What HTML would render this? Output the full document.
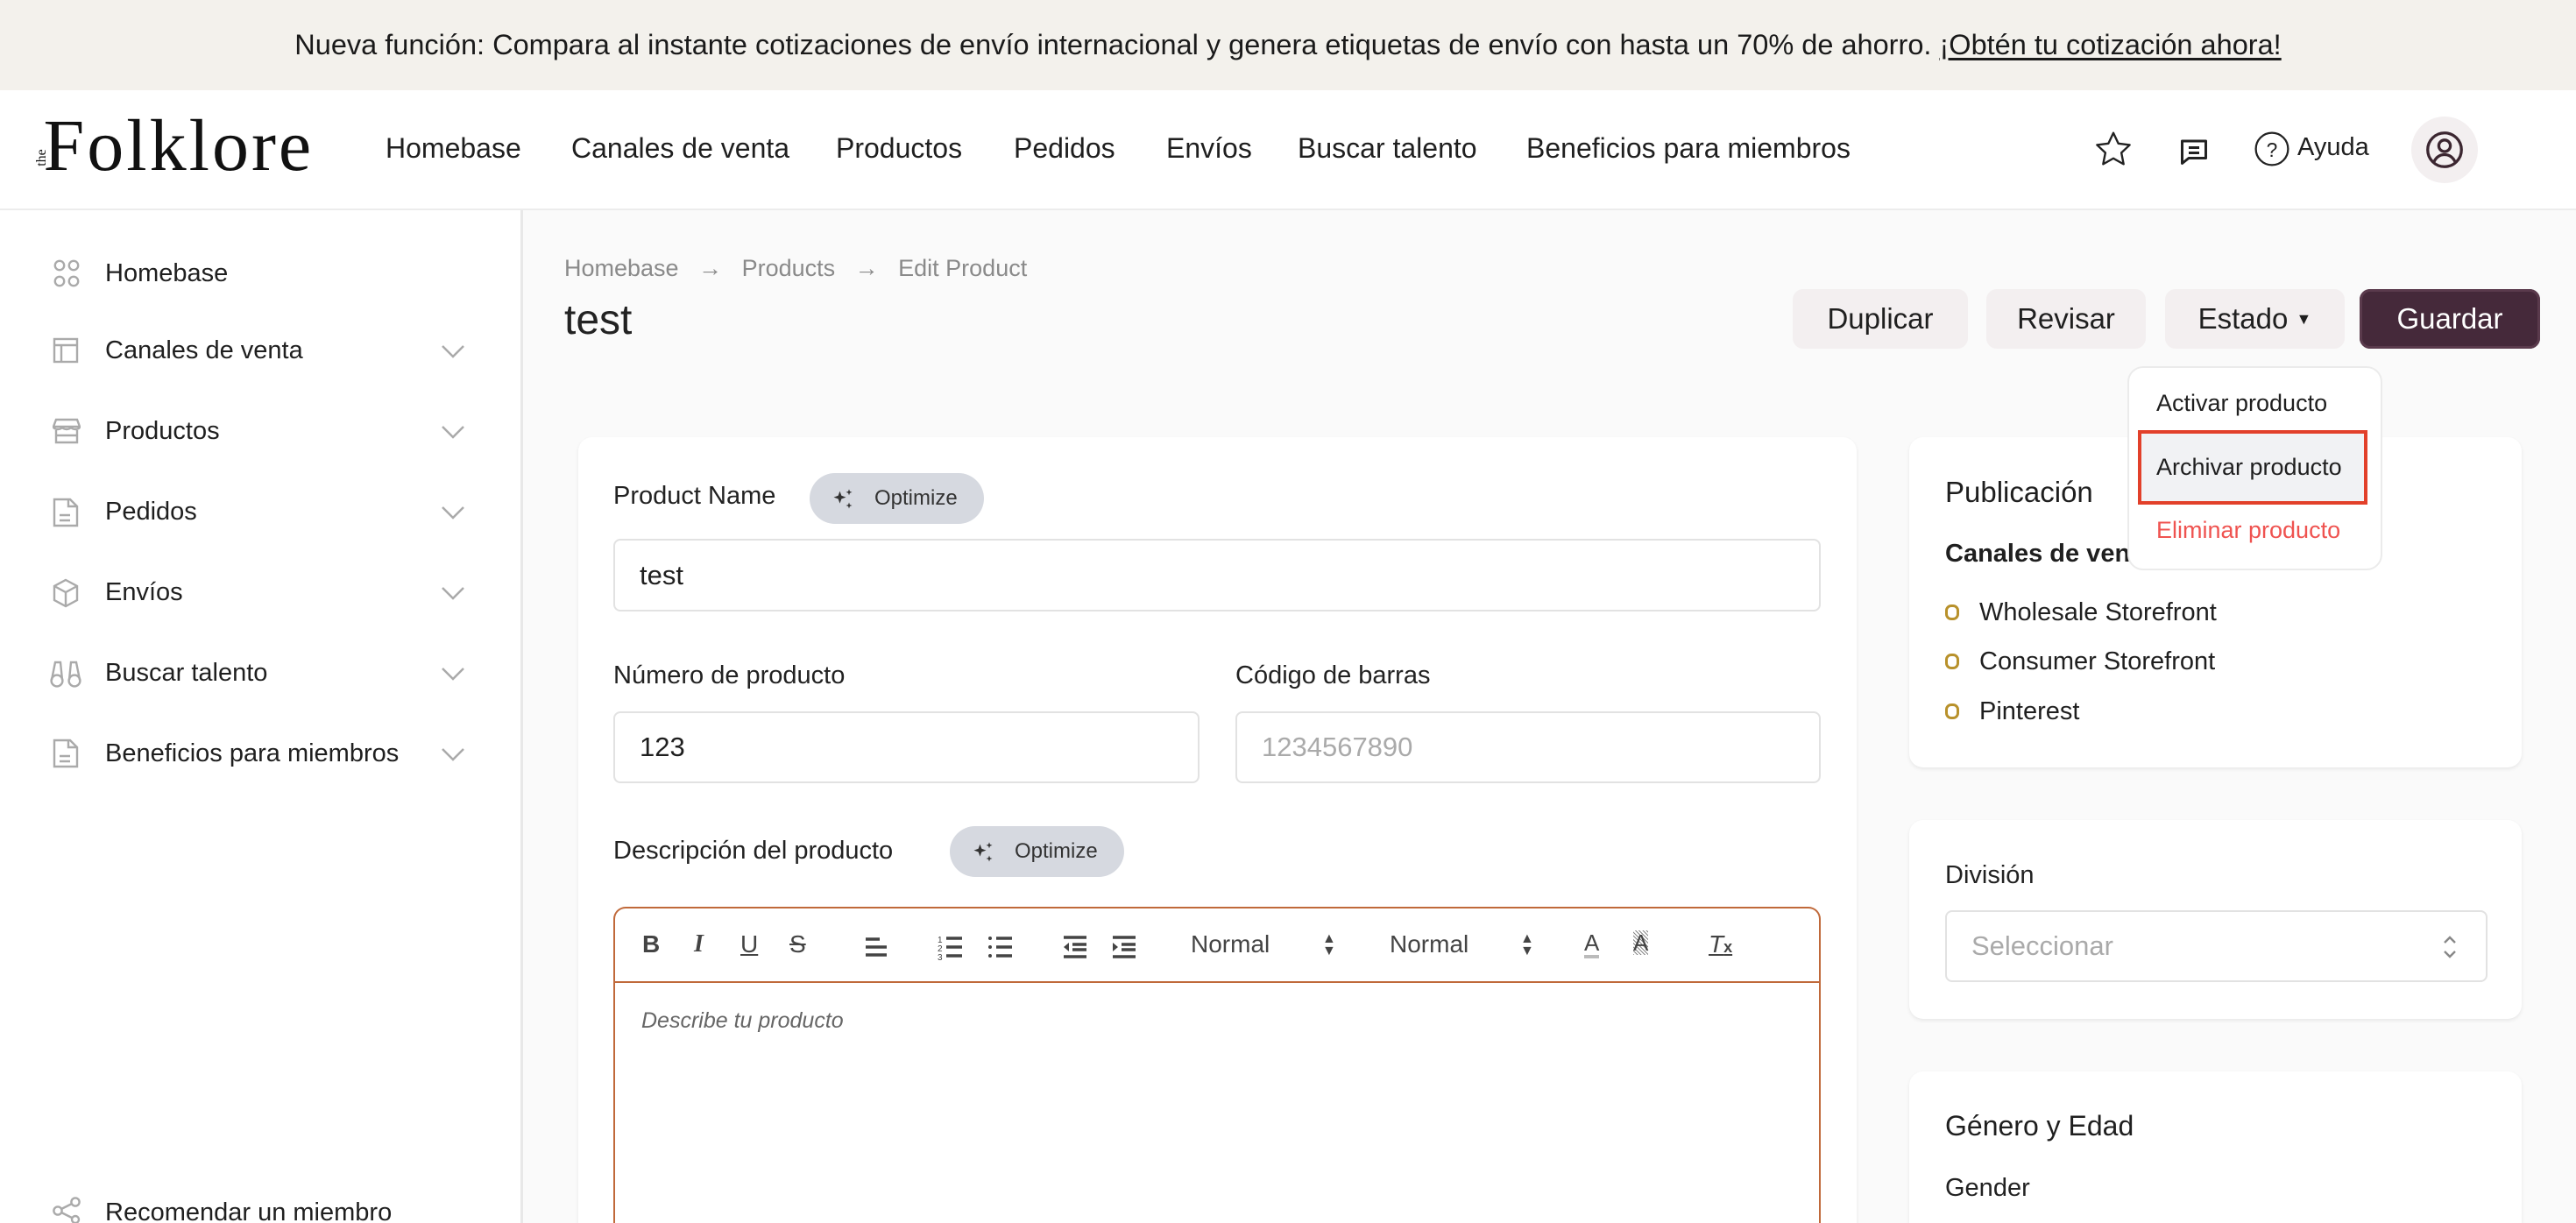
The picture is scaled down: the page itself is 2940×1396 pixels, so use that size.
<!DOCTYPE html>
<html style="overflow:hidden;height:1396px"><head><meta charset="utf-8">
<style>
*{margin:0;padding:0;box-sizing:border-box}
body{width:2940px;height:1396px;overflow:hidden;background:#fafafa;font-family:"Liberation Sans",sans-serif;color:#1f1f1f;position:relative}
.a{position:absolute;white-space:nowrap}
.banner{left:0;top:0;width:2940px;height:103px;background:#f3f1ec;font-size:32.5px;line-height:103px;text-align:center;color:#1a1a1a}
.banner u{text-underline-offset:4px}
.header{left:0;top:103px;width:2940px;height:137px;background:#fff;border-bottom:2px solid #ececec}
.nav{font-size:32px;top:151px;color:#1f1f1f}
.side{left:0;top:240px;width:597px;height:1156px;background:#fff;border-right:3px solid #e8e8e8}
.si{font-size:29px;left:120px}
.ico{position:absolute;left:60px}
.chev{position:absolute;left:502px}
.btn{top:330px;height:68px;border-radius:12px;background:#f3eff0;font-size:33px;line-height:68px;text-align:center;color:#1f1f1f}
.card{background:#fff;border-radius:16px;box-shadow:0 2px 4px rgba(0,0,0,.08)}
.lbl{font-size:29px;color:#222}
.inp{border:2px solid #e2e2e2;border-radius:8px;background:#fff;font-size:31px;padding-left:28px}
.pill{background:#d6d9e0;border-radius:30px;font-size:24px;color:#333}
.tb{position:absolute;top:1062px;font-size:28px;color:#444}
</style></head><body>
<div class="a banner">Nueva función: Compara al instante cotizaciones de envío internacional y genera etiquetas de envío con hasta un 70% de ahorro. <u>¡Obtén tu cotización ahora!</u></div>
<div class="a header"></div>
<div class="a" style="left:30px;top:118px;font-family:'Liberation Serif',serif;font-size:84px;color:#111;letter-spacing:3px"><span style="font-size:16px;display:inline-block;transform:rotate(-90deg);position:relative;top:-10px;left:8px;letter-spacing:0">the</span>Folklore</div>
<div class="a nav" style="left:440px">Homebase</div>
<div class="a nav" style="left:652px">Canales de venta</div>
<div class="a nav" style="left:954px">Productos</div>
<div class="a nav" style="left:1157px">Pedidos</div>
<div class="a nav" style="left:1331px">Envíos</div>
<div class="a nav" style="left:1481px">Buscar talento</div>
<div class="a nav" style="left:1742px">Beneficios para miembros</div>
<svg class="a" style="left:2390px;top:149px" width="44" height="42" viewBox="0 0 24 23"><path d="M12 1.5l3.1 6.6 7.1.9-5.2 4.9 1.4 7.1L12 17.4 5.6 21l1.4-7.1L1.8 9l7.1-.9z" fill="none" stroke="#222" stroke-width="1.3" stroke-linejoin="round"/></svg>
<svg class="a" style="left:2486px;top:155px" width="36" height="36" viewBox="0 0 24 24"><path d="M3 4h18v13H8l-5 4z" fill="none" stroke="#222" stroke-width="2" stroke-linejoin="round"/><path d="M8 9h8M8 13h8" stroke="#222" stroke-width="2"/></svg>
<svg class="a" style="left:2572px;top:149px" width="42" height="42" viewBox="0 0 24 24"><circle cx="12" cy="12" r="10.5" fill="none" stroke="#222" stroke-width="1.3"/><text x="12" y="17" font-size="13" text-anchor="middle" font-family="Liberation Sans" fill="#222">?</text></svg>
<div class="a" style="left:2622px;top:152px;font-size:29px">Ayuda</div>
<div class="a" style="left:2752px;top:133px;width:76px;height:76px;border-radius:50%;background:#f3eff0"></div>
<svg class="a" style="left:2768px;top:149px" width="44" height="44" viewBox="0 0 24 24"><circle cx="12" cy="12" r="10.5" fill="none" stroke="#3b2630" stroke-width="1.8"/><circle cx="12" cy="9.5" r="3.6" fill="none" stroke="#3b2630" stroke-width="1.8"/><path d="M5.5 19.3c1.5-3 4-4.3 6.5-4.3s5 1.3 6.5 4.3" fill="none" stroke="#3b2630" stroke-width="1.8"/></svg>

<div class="a side"></div>
<svg class="ico" style="top:295px" width="32" height="34" viewBox="0 0 16 17" fill="none" stroke="#aaa" stroke-width="1.2"><circle cx="4" cy="4" r="2.6"/><circle cx="12" cy="4" r="2.6"/><circle cx="4" cy="13" r="2.6"/><circle cx="12" cy="13" r="2.6"/></svg>
<div class="a si" style="top:296px">Homebase</div>
<svg class="ico" style="top:385px" width="30" height="30" viewBox="0 0 15 15" fill="none" stroke="#aaa" stroke-width="1.2"><rect x="1" y="1" width="13" height="13"/><path d="M1 4.5h13M5 4.5V14"/></svg>
<div class="a si" style="top:384px">Canales de venta</div>
<svg class="ico" style="top:477px" width="32" height="30" viewBox="0 0 16 15" fill="none" stroke="#aaa" stroke-width="1.2"><path d="M2 1h12l1.5 4H.5zM.5 5c0 2 5 2 5 0 0 2 5 2 5 0 0 2 5 2 5 0M2 7v7h12V7M2 10h12"/></svg>
<div class="a si" style="top:476px">Productos</div>
<svg class="ico" style="top:568px" width="30" height="34" viewBox="0 0 15 17" fill="none" stroke="#aaa" stroke-width="1.2"><path d="M1 1h9l4 4v11H1zM9 1v4h5M4 10h6M4 13h6"/></svg>
<div class="a si" style="top:568px">Pedidos</div>
<svg class="ico" style="top:660px" width="30" height="34" viewBox="0 0 15 17" fill="none" stroke="#aaa" stroke-width="1.2"><path d="M7.5 1L14 4.5v8L7.5 16 1 12.5v-8zM1 4.5l6.5 3.5 6.5-3.5M7.5 8v8"/></svg>
<div class="a si" style="top:660px">Envíos</div>
<svg class="ico" style="top:752px;left:57px" width="36" height="34" viewBox="0 0 18 17" fill="none" stroke="#aaa" stroke-width="1.2"><circle cx="4" cy="12.5" r="3.2"/><circle cx="14" cy="12.5" r="3.2"/><path d="M1 12l2-10h3l1 10M17 12l-2-10h-3l-1 10"/></svg>
<div class="a si" style="top:752px">Buscar talento</div>
<svg class="ico" style="top:843px" width="30" height="34" viewBox="0 0 15 17" fill="none" stroke="#aaa" stroke-width="1.2"><path d="M1 1h9l4 4v11H1zM9 1v4h5M4 10h6M4 13h6"/></svg>
<div class="a si" style="top:844px">Beneficios para miembros</div>
<svg class="chev" style="top:392px" width="30" height="18" viewBox="0 0 30 18"><path d="M3 3l12 12L27 3" fill="none" stroke="#aaa" stroke-width="2.5"/></svg>
<svg class="chev" style="top:484px" width="30" height="18" viewBox="0 0 30 18"><path d="M3 3l12 12L27 3" fill="none" stroke="#aaa" stroke-width="2.5"/></svg>
<svg class="chev" style="top:576px" width="30" height="18" viewBox="0 0 30 18"><path d="M3 3l12 12L27 3" fill="none" stroke="#aaa" stroke-width="2.5"/></svg>
<svg class="chev" style="top:668px" width="30" height="18" viewBox="0 0 30 18"><path d="M3 3l12 12L27 3" fill="none" stroke="#aaa" stroke-width="2.5"/></svg>
<svg class="chev" style="top:760px" width="30" height="18" viewBox="0 0 30 18"><path d="M3 3l12 12L27 3" fill="none" stroke="#aaa" stroke-width="2.5"/></svg>
<svg class="chev" style="top:852px" width="30" height="18" viewBox="0 0 30 18"><path d="M3 3l12 12L27 3" fill="none" stroke="#aaa" stroke-width="2.5"/></svg>
<svg class="ico" style="top:1366px" width="32" height="30" viewBox="0 0 16 15" fill="none" stroke="#aaa" stroke-width="1.2"><circle cx="3" cy="8" r="2.3"/><circle cx="13" cy="3" r="2.3"/><circle cx="13" cy="13" r="2"/><path d="M5 7l6-3M5 9l6 3"/></svg>
<div class="a si" style="top:1368px">Recomendar un miembro</div>

<div class="a" style="left:644px;top:291px;font-size:27px;color:#8a8a8a">Homebase &nbsp;&nbsp;→&nbsp;&nbsp; Products &nbsp;&nbsp;→&nbsp;&nbsp; Edit Product</div>
<div class="a" style="left:644px;top:338px;font-size:48px;color:#222">test</div>
<div class="a btn" style="left:2046px;width:200px">Duplicar</div>
<div class="a btn" style="left:2267px;width:182px">Revisar</div>
<div class="a btn" style="left:2471px;width:205px">Estado <span style="font-size:18px;position:relative;top:-5px">▼</span></div>
<div class="a btn" style="left:2693px;width:206px;background:#45293a;color:#fff;box-shadow:inset 0 0 0 3px #5a3a4c">Guardar</div>

<div class="a card" style="left:660px;top:499px;width:1459px;height:897px;border-radius:16px 16px 0 0"></div>
<div class="a lbl" style="left:700px;top:550px">Product Name</div>
<div class="a pill" style="left:924px;top:540px;width:199px;height:58px"><svg style="position:absolute;left:24px;top:16px" width="28" height="28" viewBox="0 0 24 24" fill="#333"><path d="M9 4l1.6 4.4L15 10l-4.4 1.6L9 16l-1.6-4.4L3 10l4.4-1.6z"/><path d="M18 2l.8 2.2L21 5l-2.2.8L18 8l-.8-2.2L15 5l2.2-.8zM18 15l.8 2.2 2.2.8-2.2.8L18 21l-.8-2.2L15 18l2.2-.8z"/></svg><span style="position:absolute;left:74px;top:15px">Optimize</span></div>
<div class="a inp" style="left:700px;top:615px;width:1378px;height:83px;line-height:79px">test</div>
<div class="a lbl" style="left:700px;top:755px">Número de producto</div>
<div class="a lbl" style="left:1410px;top:755px">Código de barras</div>
<div class="a inp" style="left:700px;top:812px;width:669px;height:82px;line-height:78px">123</div>
<div class="a inp" style="left:1410px;top:812px;width:668px;height:82px;line-height:78px;color:#aaa">1234567890</div>
<div class="a lbl" style="left:700px;top:955px">Descripción del producto</div>
<div class="a pill" style="left:1084px;top:943px;width:199px;height:58px"><svg style="position:absolute;left:24px;top:16px" width="28" height="28" viewBox="0 0 24 24" fill="#333"><path d="M9 4l1.6 4.4L15 10l-4.4 1.6L9 16l-1.6-4.4L3 10l4.4-1.6z"/><path d="M18 2l.8 2.2L21 5l-2.2.8L18 8l-.8-2.2L15 5l2.2-.8zM18 15l.8 2.2 2.2.8-2.2.8L18 21l-.8-2.2L15 18l2.2-.8z"/></svg><span style="position:absolute;left:74px;top:15px">Optimize</span></div>
<div class="a" style="left:700px;top:1035px;width:1378px;height:361px;border:2px solid #c0693a;border-bottom:none;border-radius:14px 14px 0 0;background:#fff"></div>
<div class="a" style="left:700px;top:1120px;width:1378px;height:2px;background:#c0693a"></div>
<div class="tb" style="left:733px;font-weight:bold">B</div>
<div class="tb" style="left:792px;font-style:italic;font-family:'Liberation Serif',serif;font-weight:bold">I</div>
<div class="tb" style="left:845px;text-decoration:underline">U</div>
<div class="tb" style="left:901px;text-decoration:line-through">S</div>
<svg class="a" style="left:986px;top:1068px" width="28" height="26" viewBox="0 0 14 13"><path d="M1 2h8M1 6.5h12M1 11h12" stroke="#444" stroke-width="1.8"/></svg>
<svg class="a" style="left:1070px;top:1066px" width="30" height="30" viewBox="0 0 15 15"><path d="M5 2.5h9M5 7.5h9M5 12.5h9" stroke="#444" stroke-width="1.8"/><text x="0" y="5" font-size="5" fill="#444">1</text><text x="0" y="10" font-size="5" fill="#444">2</text><text x="0" y="15" font-size="5" fill="#444">3</text></svg>
<svg class="a" style="left:1127px;top:1066px" width="30" height="30" viewBox="0 0 15 15"><path d="M5 2.5h9M5 7.5h9M5 12.5h9" stroke="#444" stroke-width="1.8"/><circle cx="1.5" cy="2.5" r="1" fill="#444"/><circle cx="1.5" cy="7.5" r="1" fill="#444"/><circle cx="1.5" cy="12.5" r="1" fill="#444"/></svg>
<svg class="a" style="left:1212px;top:1066px" width="30" height="30" viewBox="0 0 15 15"><path d="M1 2h13M6 6h8M6 9h8M1 13h13" stroke="#444" stroke-width="1.8"/><path d="M4 5v5L1 7.5z" fill="#444"/></svg>
<svg class="a" style="left:1268px;top:1066px" width="30" height="30" viewBox="0 0 15 15"><path d="M1 2h13M6 6h8M6 9h8M1 13h13" stroke="#444" stroke-width="1.8"/><path d="M1 5v5L4 7.5z" fill="#444"/></svg>
<div class="tb" style="left:1359px">Normal</div>
<div class="tb" style="left:1509px;font-size:16px;top:1065px;line-height:14px">▲<br>▼</div>
<div class="tb" style="left:1586px">Normal</div>
<div class="tb" style="left:1735px;font-size:16px;top:1065px;line-height:14px">▲<br>▼</div>
<div class="tb" style="left:1808px;font-size:26px;border-bottom:4px solid #bbb;line-height:28px">A</div>
<div class="tb" style="left:1864px;font-size:26px;background:repeating-linear-gradient(45deg,#888 0 1px,#fff 1px 3px);line-height:28px">A</div>
<div class="tb" style="left:1950px;font-style:italic;text-decoration:underline">T<span style="font-size:18px;font-style:normal;font-weight:bold">x</span></div>
<div class="a" style="left:732px;top:1151px;font-size:25px;font-style:italic;color:#666">Describe tu producto</div>

<div class="a card" style="left:2179px;top:499px;width:699px;height:377px"></div>
<div class="a" style="left:2220px;top:543px;font-size:33px">Publicación</div>
<div class="a" style="left:2220px;top:616px;font-size:29px;font-weight:bold">Canales de venta</div>
<div class="a" style="left:2220px;top:690px;width:16px;height:18px;border:3px solid #b8912b;border-radius:7px"></div>
<div class="a" style="left:2259px;top:683px;font-size:29px">Wholesale Storefront</div>
<div class="a" style="left:2220px;top:746px;width:16px;height:18px;border:3px solid #b8912b;border-radius:7px"></div>
<div class="a" style="left:2259px;top:739px;font-size:29px">Consumer Storefront</div>
<div class="a" style="left:2220px;top:803px;width:16px;height:18px;border:3px solid #b8912b;border-radius:7px"></div>
<div class="a" style="left:2259px;top:796px;font-size:29px">Pinterest</div>

<div class="a card" style="left:2179px;top:936px;width:699px;height:227px"></div>
<div class="a lbl" style="left:2220px;top:983px">División</div>
<div class="a inp" style="left:2220px;top:1039px;width:619px;height:82px;line-height:78px;color:#aaa">Seleccionar</div>
<svg class="a" style="left:2786px;top:1066px" width="20" height="30" viewBox="0 0 10 15"><path d="M2 5l3-3 3 3M2 10l3 3 3-3" fill="none" stroke="#888" stroke-width="1.2"/></svg>

<div class="a card" style="left:2179px;top:1223px;width:699px;height:173px;border-radius:16px 16px 0 0"></div>
<div class="a" style="left:2220px;top:1267px;font-size:32px">Género y Edad</div>
<div class="a lbl" style="left:2220px;top:1340px">Gender</div>

<div class="a" style="left:2428px;top:418px;width:291px;height:233px;background:#fff;border:2px solid #ebebeb;border-radius:18px"></div>
<div class="a" style="left:2461px;top:445px;font-size:27px">Activar producto</div>
<div class="a" style="left:2440px;top:491px;width:262px;height:85px;background:#f1f2f4;border:4px solid #e2402a"></div>
<div class="a" style="left:2461px;top:518px;font-size:27px">Archivar producto</div>
<div class="a" style="left:2461px;top:590px;font-size:27px;color:#ef5350">Eliminar producto</div>
</body></html>
